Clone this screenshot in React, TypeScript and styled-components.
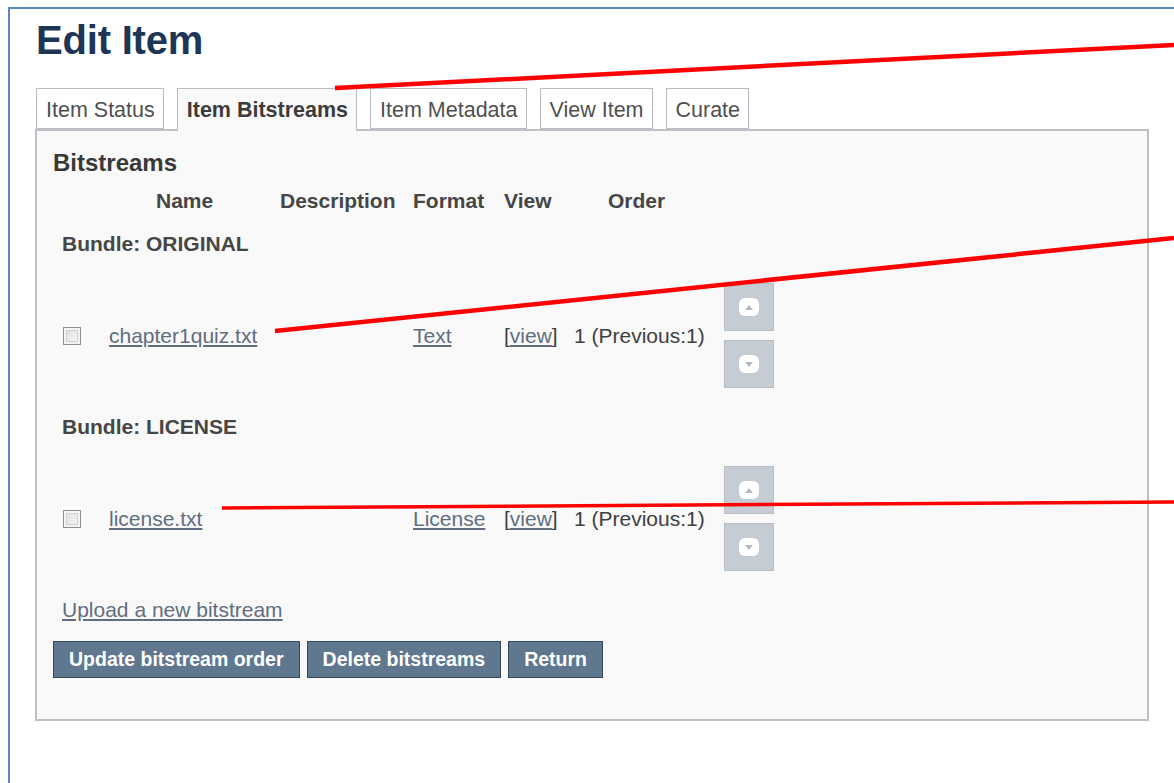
import styled, { createGlobalStyle } from 'styled-components';

const GlobalStyle = createGlobalStyle`
  html, body {
    margin: 0;
    padding: 0;
    background: #ffffff;
  }
  body {
    font-family: 'Liberation Sans', Arial, sans-serif;
    color: #3d3d3d;
  }
`;

const Frame = styled.div`
  position: relative;
  margin: 7px 0 0 8px;
  height: 776px;
  border-top: 2px solid #5b86c4;
  border-left: 2px solid #5b86c4;
  padding: 0 0 0 25px;
  box-sizing: border-box;
  overflow: hidden;
`;

const Title = styled.h1`
  margin: 8px 0 0 1px;
  font-size: 40px;
  line-height: 46px;
  font-weight: 700;
  color: #1e3655;
  letter-spacing: -0.2px;
`;

const Tabs = styled.div`
  display: flex;
  align-items: flex-end;
  gap: 13px;
  margin-top: 25px;
  padding-left: 1px;
  position: relative;
  z-index: 1;
`;

const Tab = styled.div<{ $active?: boolean }>`
  height: ${(p) => (p.$active ? '43px' : '41px')};
  box-sizing: border-box;
  padding: ${(p) => (p.$active ? '0' : '3px')} 8px 0 9px;
  display: flex;
  align-items: center;
  border: 1px solid #b9bdc1;
  border-bottom: ${(p) => (p.$active ? 'none' : '1px solid #b9bdc1')};
  background: ${(p) => (p.$active ? '#f9f9f9' : '#ffffff')};
  margin-bottom: ${(p) => (p.$active ? '-2px' : '0')};
  font-size: 21.5px;
  font-weight: ${(p) => (p.$active ? 700 : 400)};
  color: ${(p) => (p.$active ? '#3c3c3c' : '#505050')};
  white-space: nowrap;
`;

const Panel = styled.div`
  width: 1114px;
  height: 592px;
  box-sizing: border-box;
  border: 2px solid #bcc1c6;
  background: #f9f9f9;
  padding: 18px 0 0 16px;
`;

const Heading = styled.h2`
  margin: 0;
  font-size: 24px;
  line-height: 28px;
  font-weight: 700;
  color: #383838;
`;

const Grid = styled.div`
  display: grid;
  grid-template-columns: 51px 171px 133px 91px 70px 150px 60px;
  align-items: center;
  margin-top: 12px;
`;

const HeadCell = styled.div<{ $indent: number }>`
  height: 24px;
  line-height: 24px;
  padding-left: ${(p) => p.$indent}px;
  font-size: 21px;
  font-weight: 700;
  color: #464646;
  white-space: nowrap;
`;

const Bundle = styled.div<{ $above: number }>`
  grid-column: 1 / -1;
  height: 24px;
  line-height: 24px;
  padding-left: 9px;
  margin: ${(p) => p.$above}px 0 27px;
  font-size: 21px;
  font-weight: 700;
  color: #464646;
`;

const Cell = styled.div`
  padding-left: 5px;
  font-size: 21px;
  color: #404040;
  white-space: nowrap;
`;

const Link = styled.a`
  color: #5f6e80;
  text-decoration: underline;
  text-underline-offset: 2px;
  cursor: pointer;
`;

const Box = styled.input.attrs({ type: 'checkbox' })`
  appearance: none;
  display: block;
  margin: 0 0 0 10px;
  width: 18px;
  height: 18px;
  border: 1px solid #8e8e8e;
  background: linear-gradient(135deg, #dcdcdc, #fafafa);
  box-shadow: inset 0 0 0 2px #f4f4f4, inset 0 0 0 3px #d0d0d0;
`;

const Movers = styled.div`
  display: flex;
  flex-direction: column;
  gap: 9px;
  padding-left: 5px;
`;

const Mover = styled.button`
  width: 50px;
  height: 48px;
  padding: 0;
  border: 1px solid #b7bec7;
  background: #c5ccd4;
  display: flex;
  align-items: center;
  justify-content: center;
`;

const Knob = styled.span`
  width: 20px;
  height: 18px;
  border-radius: 6px;
  background: #ffffff;
  display: flex;
  align-items: center;
  justify-content: center;
`;

const Upload = styled.div`
  margin: 27px 0 0 9px;
  height: 24px;
  line-height: 24px;
  font-size: 21px;
`;

const Actions = styled.div`
  display: flex;
  gap: 7px;
  margin-top: 19px;
`;

const Action = styled.button`
  height: 37px;
  padding: 0 15px;
  border: 1px solid #34475b;
  background: #5f7890;
  color: #ffffff;
  font-family: 'Liberation Sans', Arial, sans-serif;
  font-size: 19.5px;
  font-weight: 700;
  cursor: pointer;
`;

const Callouts = styled.svg`
  position: absolute;
  left: -10px;
  top: -9px;
  pointer-events: none;
  z-index: 5;
`;

function Arrow({ up }: { up: boolean }) {
  return (
    <svg width="8" height="5" viewBox="0 0 8 5">
      <path d={up ? 'M0 5 L4 0 L8 5 Z' : 'M0 0 L4 5 L8 0 Z'} fill="#b4b9c0" />
    </svg>
  );
}

type Row = { name: string; format: string };

function FileRow({ row }: { row: Row }) {
  return (
    <>
      <Cell style={{ paddingLeft: 0 }}>
        <Box />
      </Cell>
      <Cell>
        <Link>{row.name}</Link>
      </Cell>
      <Cell />
      <Cell>
        <Link>{row.format}</Link>
      </Cell>
      <Cell>
        [<Link>view</Link>]
      </Cell>
      <Cell>1 (Previous:1)</Cell>
      <Movers>
        <Mover>
          <Knob>
            <Arrow up />
          </Knob>
        </Mover>
        <Mover>
          <Knob>
            <Arrow up={false} />
          </Knob>
        </Mover>
      </Movers>
    </>
  );
}

export default function App() {
  return (
    <>
      <GlobalStyle />
      <Frame>
        <Title>Edit Item</Title>
        <Tabs>
          <Tab>Item Status</Tab>
          <Tab $active>Item Bitstreams</Tab>
          <Tab>Item Metadata</Tab>
          <Tab>View Item</Tab>
          <Tab>Curate</Tab>
        </Tabs>
        <Panel>
          <Heading>Bitstreams</Heading>
          <Grid>
            <HeadCell $indent={0} />
            <HeadCell $indent={52}>Name</HeadCell>
            <HeadCell $indent={5}>Description</HeadCell>
            <HeadCell $indent={5}>Format</HeadCell>
            <HeadCell $indent={5}>View</HeadCell>
            <HeadCell $indent={39}>Order</HeadCell>
            <HeadCell $indent={0} />
            <Bundle $above={19}>Bundle: ORIGINAL</Bundle>
            <FileRow row={{ name: 'chapter1quiz.txt', format: 'Text' }} />
            <Bundle $above={27}>Bundle: LICENSE</Bundle>
            <FileRow row={{ name: 'license.txt', format: 'License' }} />
          </Grid>
          <Upload>
            <Link>Upload a new bitstream</Link>
          </Upload>
          <Actions>
            <Action>Update bitstream order</Action>
            <Action>Delete bitstreams</Action>
            <Action>Return</Action>
          </Actions>
        </Panel>
        {/* red callout lines pointing out the tab, the file name and the license */}
        <Callouts width="1174" height="783" viewBox="0 0 1174 783">
          <line x1="335" y1="88" x2="1174" y2="45" stroke="#ff0000" strokeWidth="4.5" />
          <line x1="275" y1="331" x2="1174" y2="238" stroke="#ff0000" strokeWidth="4.5" />
          <line x1="222" y1="508" x2="1174" y2="502" stroke="#ff0000" strokeWidth="3.5" />
        </Callouts>
      </Frame>
    </>
  );
}
